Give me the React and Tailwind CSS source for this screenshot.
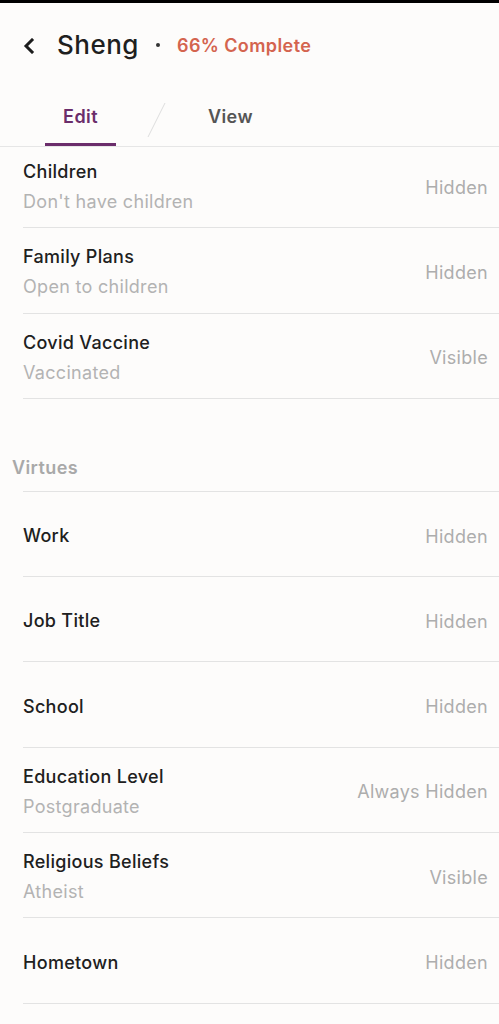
import React from "react";

const rowsTop = [
  { t: "Children", s: "Don't have children", v: "Hidden" },
  { t: "Family Plans", s: "Open to children", v: "Hidden" },
  { t: "Covid Vaccine", s: "Vaccinated", v: "Visible" },
];

const rowsVirtues = [
  { t: "Work", v: "Hidden" },
  { t: "Job Title", v: "Hidden" },
  { t: "School", v: "Hidden" },
  { t: "Education Level", s: "Postgraduate", v: "Always Hidden" },
  { t: "Religious Beliefs", s: "Atheist", v: "Visible" },
  { t: "Hometown", v: "Hidden" },
];

function Row({ t, s, v }) {
  return (
    <div className="ml-[23px] h-[85.3px] pt-[4px] border-b border-[#e3e3e3] flex items-center justify-between pr-[11px] shrink-0">
      <div className="flex flex-col">
        <span className="text-[18px] leading-[26px] tracking-[0.3px] text-[#202020] font-medium">{t}</span>
        {s && <span className="text-[18px] leading-[26px] tracking-[0.3px] mt-[4px] text-[#b3b3b3]">{s}</span>}
      </div>
      <span className="text-[18px] tracking-[0.3px] text-[#adadad]">{v}</span>
    </div>
  );
}

export default function App() {
  return (
    <div
      className="w-[499px] h-[1024px] bg-[#fdfcfb] overflow-hidden flex flex-col"
      style={{ fontFamily: "Inter, 'Open Sans', sans-serif" }}
    >
      <div className="h-[3px] bg-black shrink-0" />
      <div className="h-[84px] flex items-center shrink-0 pl-[22px]">
        <svg width="14" height="16" viewBox="0 0 14 16" className="mt-[1px]">
          <path d="M10 2 L4 8 L10 14" fill="none" stroke="#1c1c1c" strokeWidth="3" strokeLinecap="square" />
        </svg>
        <span className="ml-[21px] text-[26px] tracking-[0.5px] text-[#1f1f1f] font-medium leading-none">Sheng</span>
        <span className="ml-[17px] w-[4px] h-[4px] rounded-full bg-[#333]" />
        <span className="ml-[17px] text-[18px] tracking-[0.4px] font-semibold text-[#d4644f]">66% Complete</span>
      </div>
      <div className="h-[60px] border-b border-[#e6e6e6] flex items-end shrink-0 relative">
        <div className="ml-[45px] w-[71px] h-full flex flex-col items-center justify-between">
          <span className="text-[18px] tracking-[0.4px] font-semibold text-[#6b2d6b] mt-[16px]">Edit</span>
          <div className="w-full h-[3px] bg-[#6b2d6b]" />
        </div>
        <svg width="20" height="36" viewBox="0 0 20 36" className="absolute left-[147px] top-[15px]">
          <line x1="18" y1="1" x2="1" y2="35" stroke="#dedede" strokeWidth="1" />
        </svg>
        <div className="ml-[92px] h-full flex flex-col">
          <span className="text-[18px] tracking-[0.4px] font-semibold text-[#555] mt-[16px]">View</span>
        </div>
      </div>
      <div className="flex-1 overflow-hidden">
        <div className="-mt-[4px] flex flex-col">
          {rowsTop.map((r) => (
            <Row key={r.t} {...r} />
          ))}
          <div className="h-[93px] pl-[12px] flex flex-col justify-end">
            <span className="text-[18px] tracking-[0.4px] font-semibold text-[#a9a9a9] mb-[10px]">Virtues</span>
            <div className="ml-[11px] border-b border-[#e3e3e3]" />
          </div>
          {rowsVirtues.map((r) => (
            <Row key={r.t} {...r} />
          ))}
        </div>
      </div>
    </div>
  );
}
